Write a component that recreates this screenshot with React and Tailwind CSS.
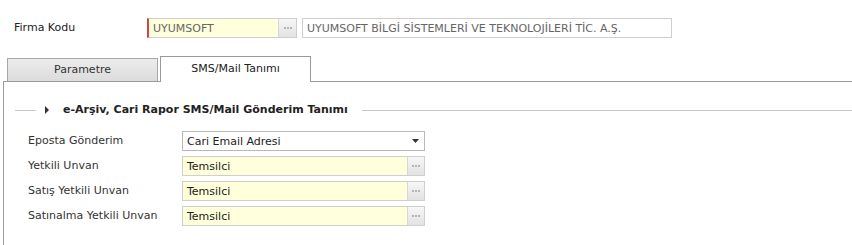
import React from "react";

const Dots = () => (
  <div className="flex items-center justify-center gap-[1px]">
    <span className="w-[2px] h-[2px] bg-[#b4b4b4]" />
    <span className="w-[2px] h-[2px] bg-[#b4b4b4]" />
    <span className="w-[2px] h-[2px] bg-[#b4b4b4]" />
  </div>
);

// lookup input with the "..." button on the right
const LookupInput = ({ value, className = "" }) => (
  <div className={`flex h-[20px] border border-[#cfcfcf] bg-[#ffffdc] ${className}`}>
    <div className="flex-1 flex items-center pl-[4px] text-[#222] leading-none">{value}</div>
    <div className="w-[17px] flex items-center justify-center border-l border-[#d6d6d6] bg-gradient-to-b from-[#f7f7f7] to-[#e2e2e2]">
      <Dots />
    </div>
  </div>
);

const FieldRow = ({ label, children }) => (
  <div className="flex items-center h-[20px]">
    <div className="w-[154px] text-[#333]">{label}</div>
    {children}
  </div>
);

export default function App() {
  return (
    <div
      className="w-full h-[245px] bg-white text-[11px] text-[#333] overflow-hidden"
      style={{ fontFamily: '"DejaVu Sans", Verdana, sans-serif' }}
    >
      {/* Firma Kodu */}
      <div className="flex items-center pt-[18px] pl-[14px]">
        <div className="w-[133px] text-[#222] pt-px">Firma Kodu</div>
        <div className="flex h-[20px] w-[150px] border border-[#cfcfcf] border-l-2 border-l-[#c9484a] bg-[#ffffdc]">
          <div className="flex-1 flex items-center pl-[4px] text-[#666] leading-none">UYUMSOFT</div>
          <div className="w-[18px] flex items-center justify-center border-l border-[#d6d6d6] bg-gradient-to-b from-[#f7f7f7] to-[#e2e2e2]">
            <Dots />
          </div>
        </div>
        <div className="ml-[5px] w-[370px] h-[20px] border border-[#cfcfcf] flex items-center pl-[4px] text-[#666] leading-none">
          UYUMSOFT BİLGİ SİSTEMLERİ VE TEKNOLOJİLERİ TİC. A.Ş.
        </div>
      </div>

      {/* Tabs */}
      <div className="ml-[3px] mt-[19px]">
        <div className="flex items-end pl-[4px] gap-[2px] border-b border-[#9a9a9a] h-[25px]">
          <div className="w-[151px] h-[23px] border border-b-0 border-[#a8a8a8] bg-gradient-to-b from-[#ececec] to-[#dcdcdc] flex items-center justify-center text-[#333]">
            Parametre
          </div>
          <div className="w-[151px] h-[26px] -mb-px border border-b-0 border-[#9a9a9a] bg-white flex items-center justify-center text-[#222]">
            SMS/Mail Tanımı
          </div>
        </div>

        {/* Panel */}
        <div className="border-l border-[#9a9a9a] h-[170px] pt-[20px]">
          <div className="flex items-center h-[16px]">
            <div className="ml-[11px] w-[21px] h-px bg-[#c8c8c8]" />
            <svg className="ml-[9px]" width="5" height="8" viewBox="0 0 5 8">
              <path d="M0 0 L4 4 L0 8 Z" fill="#333" />
            </svg>
            <div className="ml-[13px] font-bold text-[#222] whitespace-nowrap">
              e-Arşiv, Cari Rapor SMS/Mail Gönderim Tanımı
            </div>
            <div className="ml-[14px] flex-1 h-px bg-[#c8c8c8]" />
          </div>

          <div className="mt-[13px] pl-[24px] flex flex-col gap-[5px]">
            <FieldRow label="Eposta Gönderim">
              <div className="w-[243px] h-[20px] border border-[#b9b9b9] bg-white flex items-center pl-[4px] pr-[5px] text-[#222] leading-none">
                <span className="flex-1">Cari Email Adresi</span>
                <svg width="7" height="4" viewBox="0 0 7 4">
                  <path d="M0 0 L7 0 L3.5 4 Z" fill="#333" />
                </svg>
              </div>
            </FieldRow>
            <FieldRow label="Yetkili Unvan">
              <LookupInput value="Temsilci" className="w-[243px]" />
            </FieldRow>
            <FieldRow label="Satış Yetkili Unvan">
              <LookupInput value="Temsilci" className="w-[243px]" />
            </FieldRow>
            <FieldRow label="Satınalma Yetkili Unvan">
              <LookupInput value="Temsilci" className="w-[243px]" />
            </FieldRow>
          </div>
        </div>
      </div>
    </div>
  );
}
